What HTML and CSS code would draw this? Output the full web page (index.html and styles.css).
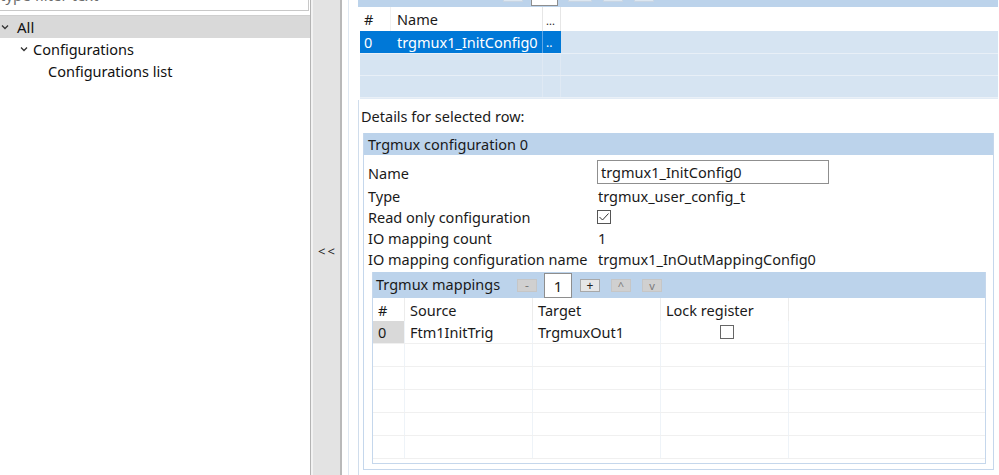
FILE: index.html
```html
<!DOCTYPE html>
<html>
<head>
<meta charset="utf-8">
<link rel="stylesheet" href="styles.css">
</head>
<body>
<div class="app">
  <div class="left">
    <div class="filter">type filter text</div>
    <div class="tree">
      <div class="node sel"><span class="chev"><svg width="8" height="6" viewBox="0 0 8 6"><path d="M1 1.5 L4 4.5 L7 1.5" fill="none" stroke="#333" stroke-width="1.3"/></svg></span>All</div>
      <div class="node l1"><span class="chev"><svg width="8" height="6" viewBox="0 0 8 6"><path d="M1 1.5 L4 4.5 L7 1.5" fill="none" stroke="#333" stroke-width="1.3"/></svg></span>Configurations</div>
      <div class="node l2">Configurations list</div>
    </div>
  </div>
  <div class="sash"><span class="sash-label">&lt;&lt;</span></div>
  <div class="right">
    <div class="toplist">
      <div class="toolbar">
        <span class="tb-btn"></span>
        <span class="tb-field"></span>
        <span class="tb-btn"></span>
        <span class="tb-btn"></span>
        <span class="tb-btn"></span>
      </div>
      <div class="trow thead">
        <div class="c-idx">#</div>
        <div class="c-name">Name</div>
        <div class="c-more">...</div>
        <div class="c-rest"></div>
      </div>
      <div class="trow tsel">
        <div class="c-idx">0</div>
        <div class="c-name">trgmux1_InitConfig0</div>
        <div class="c-more">..</div>
        <div class="c-rest"></div>
      </div>
      <div class="trow tempty">
        <div class="c-idx"></div><div class="c-name"></div><div class="c-more"></div><div class="c-rest"></div>
      </div>
      <div class="trow tempty">
        <div class="c-idx"></div><div class="c-name"></div><div class="c-more"></div><div class="c-rest"></div>
      </div>
      <div class="tstub"></div>
    </div>
    <div class="details">
      <div class="details-title">Details for selected row:</div>
      <div class="group">
        <div class="group-head">Trgmux configuration 0</div>
        <div class="props">
          <div class="plabel pname">Name</div>
          <div class="pvalue pname"><div class="input">trgmux1_InitConfig0</div></div>
          <div class="plabel">Type</div>
          <div class="pvalue">trgmux_user_config_t</div>
          <div class="plabel">Read only configuration</div>
          <div class="pvalue"><span class="check checked"><svg width="12" height="12" viewBox="0 0 12 12"><path d="M1.5 6 L4.5 9 L10.5 2.5" fill="none" stroke="#333" stroke-width="1"/></svg></span></div>
          <div class="plabel">IO mapping count</div>
          <div class="pvalue">1</div>
          <div class="plabel">IO mapping configuration name</div>
          <div class="pvalue">trgmux1_InOutMappingConfig0</div>
        </div>
        <div class="subgroup">
          <div class="sub-head">
            <span class="sub-title">Trgmux mappings</span>
            <span class="btn dis b-minus">-</span>
            <span class="idx-field">1</span>
            <span class="btn b-plus">+</span>
            <span class="btn dis b-up">^</span>
            <span class="btn dis b-down">v</span>
          </div>
          <div class="mrow mhead">
            <div class="m-idx">#</div><div class="m-col">Source</div><div class="m-col">Target</div><div class="m-col">Lock register</div><div class="m-rest"></div>
          </div>
          <div class="mrow">
            <div class="m-idx gray">0</div><div class="m-col">Ftm1InitTrig</div><div class="m-col">TrgmuxOut1</div><div class="m-col center"><span class="check"></span></div><div class="m-rest"></div>
          </div>
          <div class="mrow"><div class="m-idx"></div><div class="m-col"></div><div class="m-col"></div><div class="m-col"></div><div class="m-rest"></div></div>
          <div class="mrow"><div class="m-idx"></div><div class="m-col"></div><div class="m-col"></div><div class="m-col"></div><div class="m-rest"></div></div>
          <div class="mrow"><div class="m-idx"></div><div class="m-col"></div><div class="m-col"></div><div class="m-col"></div><div class="m-rest"></div></div>
          <div class="mrow"><div class="m-idx"></div><div class="m-col"></div><div class="m-col"></div><div class="m-col"></div><div class="m-rest"></div></div>
          <div class="mrow"><div class="m-idx"></div><div class="m-col"></div><div class="m-col"></div><div class="m-col"></div><div class="m-rest"></div></div>
        </div>
      </div>
    </div>
  </div>
</div>
</body>
</html>
```
FILE: styles.css
```css
* { box-sizing: border-box; }
html, body { margin: 0; padding: 0; }
body {
  width: 999px;
  height: 475px;
  overflow: hidden;
  background: #fff;
  font-family: "Noto Sans", "Open Sans", sans-serif;
  font-size: 14.5px;
  color: #1a1a1a;
}
.app {
  display: flex;
  height: 475px;
}

/* left pane */
.left {
  width: 311px;
  flex: none;
  display: flex;
  flex-direction: column;
  border-right: 1px solid #b4b4b4;
}
.filter {
  height: 23px;
  margin-top: -12px;
  color: #6d6d6d;
  font-size: 15px;
  line-height: 15px;
  border-bottom: 1px solid #c8c8c8;
  border-right: 1px solid #c8c8c8;
  margin-right: 1px;
}
.tree {
  margin-top: 4px;
  border-top: 1px solid #cfcfcf;
  flex: 1;
}
.node {
  height: 22px;
  display: flex;
  align-items: center;
  color: #111;
}
.node.sel { background: #d9d9d9; font-size: 15px; }
.chev {
  width: 17px;
  display: inline-flex;
  justify-content: flex-start;
  padding-left: 1px;
}
.node.l1 { padding-left: 19px; }
.node.l1 .chev { width: 14px; }
.node.l2 { padding-left: 48px; }

/* sash */
.sash {
  width: 31px;
  flex: none;
  background: #e3e3e3;
  border-left: 2px solid #f2f2f2;
  border-right: 2px solid #b9b9b9;
  display: flex;
  justify-content: center;
  padding-top: 242px;
  font-size: 13px;
  color: #222;
}
.sash-label { letter-spacing: 2px; padding-left: 2px; }

/* right pane */
.right {
  flex: 1;
  min-width: 0;
  padding-right: 1px;
  border-left: 1px solid #dfe8f2;
  margin-left: 6px;
  padding-left: 9px;
}
.toplist {
  width: 640px;
}
.toolbar {
  height: 26px;
  margin-top: -19px;
  background: #bcd3eb;
  display: flex;
  align-items: flex-end;
  padding-left: 145px;
  gap: 8px;
}
.tb-btn {
  width: 20px;
  height: 17px;
  margin-bottom: 5px;
  background: #dde7f1;
  border: 1px solid #c9d6e4;
}
.tb-field {
  width: 27px;
  height: 24px;
  margin-bottom: 1px;
  background: #fff;
  border: 1px solid #8e8e8e;
}
.toolbar .tb-btn:nth-child(3) { width: 24px; margin-left: 2px; }
.toolbar .tb-btn:nth-child(4) { margin-left: 3px; }
.toolbar .tb-btn:nth-child(5) { margin-left: 3px; }

.trow {
  display: flex;
  height: 22px;
  align-items: stretch;
}
.trow > div {
  display: flex;
  align-items: center;
}
.c-idx { width: 33px; padding-left: 6px; }
.c-name { width: 152px; padding-left: 6px; }
.c-more { width: 18px; padding-left: 3px; font-size: 12px; }
.c-rest { flex: 1; }
.thead { height: 24px; background: #fff; }
.thead > div { border-right: 1px solid #e6e6e6; }
.thead .c-idx { border-right: 1px solid #f0f0f0; }
.thead .c-more { align-items: flex-end; padding-bottom: 3px; font-size: 11px; }
.thead .c-rest { border-right: none; }
.tsel { margin-left: 2px; }
.tsel > div { background: #d6e4f2; }
.tsel .c-idx, .tsel .c-name, .tsel .c-more { background: #0078d7; color: #fff; }
.tsel .c-idx { width: 31px; padding-left: 4px; }
.tsel .c-name { border-right: 1px solid #5ea6e6; }
.tempty { margin-left: 2px; border-top: 1px solid #e8eff7; }
.tempty > div { background: #d6e4f2; }
.tempty .c-idx { width: 31px; }
.tempty .c-name { border-right: 1px solid #dfe9f4; }
.tempty .c-more { border-right: 1px solid #dfe9f4; }
.tstub { height: 2px; margin-left: 2px; background: #e2ebf5; border-top: 1px solid #eaf0f7; }

/* details */
.details {
  border-left: 1px solid #d0ddec;
  margin-top: 1px;
  padding-left: 2px;
  height: 380px;
}
.details-title {
  padding-top: 8px;
  height: 33px;
  line-height: 16px;
}
.group {
  margin-left: 2px;
  width: 631px;
  height: 337px;
  border: 1px solid #c5d7ec;
  border-top: none;
}
.group-head {
  height: 22px;
  background: #bcd3eb;
  padding-left: 4px;
  display: flex;
  align-items: center;
}
.props {
  display: grid;
  grid-template-columns: 230px 1fr;
  padding-left: 4px;
  padding-top: 5px;
}
.plabel, .pvalue {
  height: 21px;
  display: flex;
  align-items: center;
}
.plabel.pname, .pvalue.pname { height: 25px; align-items: flex-start; }
.plabel.pname { padding-top: 3px; }
.input {
  width: 232px;
  height: 24px;
  border: 1px solid #8f8f8f;
  padding-left: 3px;
  display: flex;
  align-items: center;
  margin-left: -1px;
}
.check {
  width: 14px;
  height: 14px;
  border: 1px solid #555;
  display: inline-flex;
  align-items: center;
  justify-content: center;
  background: #fff;
}
.checked { margin-left: -1px; }

.subgroup {
  margin-left: 8px;
  margin-top: 3px;
  width: 614px;
  height: 192px;
  border: 1px solid #c5d7ec;
  border-top: none;
}
.sub-head {
  height: 26px;
  background: #bcd3eb;
  display: flex;
  align-items: center;
  padding-left: 3px;
}
.sub-title { width: 141px; margin-top: -3px; }
.btn {
  width: 20px;
  height: 13px;
  display: inline-flex;
  align-items: center;
  justify-content: center;
  font-size: 12px;
  border: 1px solid #a8a8a8;
  background: #e6e6e6;
  color: #222;
  line-height: 1;
  margin-top: 1px;
}
.btn.dis { background: #d0d0d0; border-color: #c6c6c6; color: #7a7a7a; }
.b-up, .b-down { font-size: 11px; }
.idx-field {
  width: 28px;
  height: 25px;
  margin: 1px 8px 0 7px;
  background: #fff;
  border: 1px solid #8e8e8e;
  display: inline-flex;
  align-items: center;
  justify-content: center;
  font-size: 15px;
}
.b-plus { margin-right: 11px; }
.b-up { margin-right: 11px; }
.mrow {
  display: flex;
  height: 23px;
  border-bottom: 1px solid #f0f0f0;
}
.mrow > div { display: flex; align-items: center; }
.m-idx { width: 32px; padding-left: 5px; border-right: 1px solid #eef3f8; }
.m-col { width: 128px; padding-left: 5px; border-right: 1px solid #eef3f8; }
.m-rest { flex: 1; }
.mhead { border-bottom: none; }
.mhead > div { border-right: 1px solid #ececec; }
.mhead .m-rest { border-right: none; }
.m-idx.gray { background: #d9d9d9; }
.center { justify-content: center; }
.mrow .check { border-color: #666; width: 14px; height: 14px; }
```
